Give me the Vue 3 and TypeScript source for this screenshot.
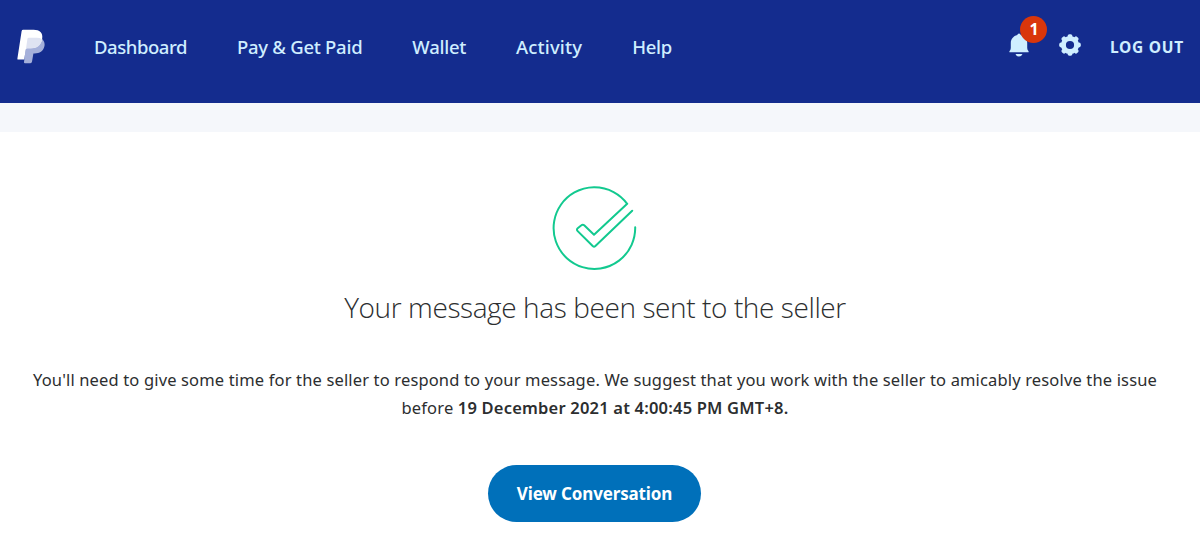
<script setup lang="ts">
interface NavItem {
  label: string
  key: string
}

const navItems: NavItem[] = [
  { label: 'Dashboard', key: 'dashboard' },
  { label: 'Pay & Get Paid', key: 'pay' },
  { label: 'Wallet', key: 'wallet' },
  { label: 'Activity', key: 'activity' },
  { label: 'Help', key: 'help' },
]
const notifications = 1
const teeth: number[] = [0, 45, 90, 135, 180, 225, 270, 315]
</script>

<template>
  <div class="page">
    <header class="bar">
      <svg class="logo" viewBox="0 0 28 35" width="28" height="35">
        <path d="M10 9.5H24.5C27 11.5 28.1 14 27.4 17.3C26.3 22.2 22.6 24.4 17.6 24.4H16.4L15 32.8Q14.8 34.2 13.4 34.2H8Q6.8 34.2 7 33Z" fill="#a5b0da" />
        <path d="M6.2.8H16.6C22.6.8 26.2 4 25.2 9.6C24.1 16.3 19.8 19.3 13.8 19.3H10.3Q9 19.3 8.8 20.6L7.2 30.6H1.2Q.2 30.6.4 29.4L4.6 2.2Q4.8.8 6.2.8Z" fill="#fff" />
        <path d="M11.7 8.8H19.8Q23 8.8 25.2 10.2C24 16.5 19.8 19.3 13.8 19.3H10.3Q9.4 19.3 9 19.8L10.4 10Q10.6 8.8 11.7 8.8Z" fill="#dfe3f2" />
      </svg>
      <nav class="nav">
        <a v-for="item in navItems" :key="item.key" :class="['nav-link', item.key]">{{ item.label }}</a>
      </nav>
      <div class="tools">
        <div class="bell">
          <svg viewBox="0 0 20 24" width="20" height="24">
            <path d="M10 0.5Q11.4.5 11.7 2C15.6 3 18.2 6 18.2 10V15Q18.2 17 19.6 18.3V19.3H.4V18.3Q1.8 17 1.8 15V10C1.8 6 4.4 3 8.3 2Q8.6.5 10 .5ZM6.5 21H13.5Q12.4 23.6 10 23.6T6.5 21Z" fill="#cfeeff" />
          </svg>
          <span class="badge">{{ notifications }}</span>
        </div>
        <svg class="gear" viewBox="-11 -11 22 22" width="22" height="22">
          <rect v-for="t in teeth" :key="t" x="-2.4" y="-10.8" width="4.8" height="5" rx="1.8" :transform="`rotate(${t})`" fill="#cfeeff" />
          <circle r="6.6" fill="none" stroke="#cfeeff" stroke-width="5" />
        </svg>
        <a class="logout">LOG OUT</a>
      </div>
    </header>
    <div class="strip"></div>
    <main class="content">
      <svg class="check" viewBox="0 0 86 86" width="86" height="86">
        <path d="M75.2 19.8A40.8 40.8 0 1 0 83.2 43.2M75.2 19.8L42 50.8L32.2 41.3Q30.8 40.1 29.4 41.3L25.7 44.3Q24.2 45.6 25.7 47.1L40.7 62Q42 63.2 43.4 62L80.2 26.8" fill="none" stroke="#12c98f" stroke-width="2" stroke-linecap="round" stroke-linejoin="round" />
      </svg>
      <h1 class="title">Your message has been sent to the seller</h1>
      <p class="message">
        <span class="line first">You'll need to give some time for the seller to respond to your message. We suggest that you work with the seller to amicably resolve the issue</span>
        <span class="line second">before <strong>19 December 2021 at 4:00:45 PM GMT+8.</strong></span>
      </p>
      <button class="action" type="button">View Conversation</button>
    </main>
  </div>
</template>

<style>
body {
  margin: 0;
  background: #fff;
}
</style>

<style scoped>
.page {
  width: 1200px;
  height: 535px;
  overflow: hidden;
  background: #fff;
  color: #2c2e2f;
  font-family: "Noto Sans", "Open Sans", sans-serif;
}
.bar {
  height: 103px;
  box-sizing: border-box;
  display: flex;
  align-items: flex-start;
  background: #142c8e;
  padding: 0 17px;
  color: #cfeeff;
  white-space: nowrap;
}
.logo {
  flex: none;
  margin: 29px 49px 0 0;
}
.nav {
  display: flex;
  gap: 50px;
  padding-top: 34px;
}
.nav-link {
  font-size: 18.5px;
  line-height: 26px;
  font-weight: 500;
  letter-spacing: -0.27px;
}
.nav-link.dashboard {
  letter-spacing: -0.45px;
}
.nav-link.activity {
  letter-spacing: 0.15px;
}
.tools {
  margin-left: auto;
  display: flex;
}
.bell {
  position: relative;
  width: 20px;
  height: 24px;
  margin: 33px 30px 0 0;
}
.bell svg {
  display: block;
}
.badge {
  position: absolute;
  left: 11px;
  top: -17px;
  width: 27px;
  height: 27px;
  border-radius: 50%;
  background: #d9360b;
  color: #fff;
  font-size: 16px;
  font-weight: 700;
  line-height: 27px;
  text-align: center;
}
.gear {
  margin: 34px 28.5px 0 0;
}
.logout {
  margin-top: 34px;
  margin-right: -1px;
  font-size: 15.5px;
  font-weight: 700;
  line-height: 26px;
  letter-spacing: 0.75px;
}
.strip {
  height: 29px;
  background: #f5f7fb;
}
.content {
  width: 1190px;
  display: flex;
  flex-direction: column;
  align-items: center;
}
.check {
  margin-top: 52px;
}
.title {
  margin: 17px 0 0;
  font-family: "Open Sans", sans-serif;
  font-size: 28px;
  font-weight: 300;
  line-height: 40px;
  letter-spacing: -0.4px;
  white-space: nowrap;
}
.message {
  margin: 39px 0 0;
  display: flex;
  flex-direction: column;
  align-items: center;
  font-size: 16.5px;
  line-height: 28px;
  letter-spacing: 0.15px;
  white-space: nowrap;
}
.message strong {
  font-weight: 600;
  letter-spacing: 0.2px;
}
.action {
  width: 213px;
  height: 57px;
  margin: 43px 1px 0 0;
  padding: 0;
  border: 0;
  border-radius: 29px;
  background: #0070ba;
  color: #fff;
  font-family: inherit;
  font-size: 17px;
  font-weight: 700;
  line-height: 57px;
  letter-spacing: -0.15px;
}
</style>
